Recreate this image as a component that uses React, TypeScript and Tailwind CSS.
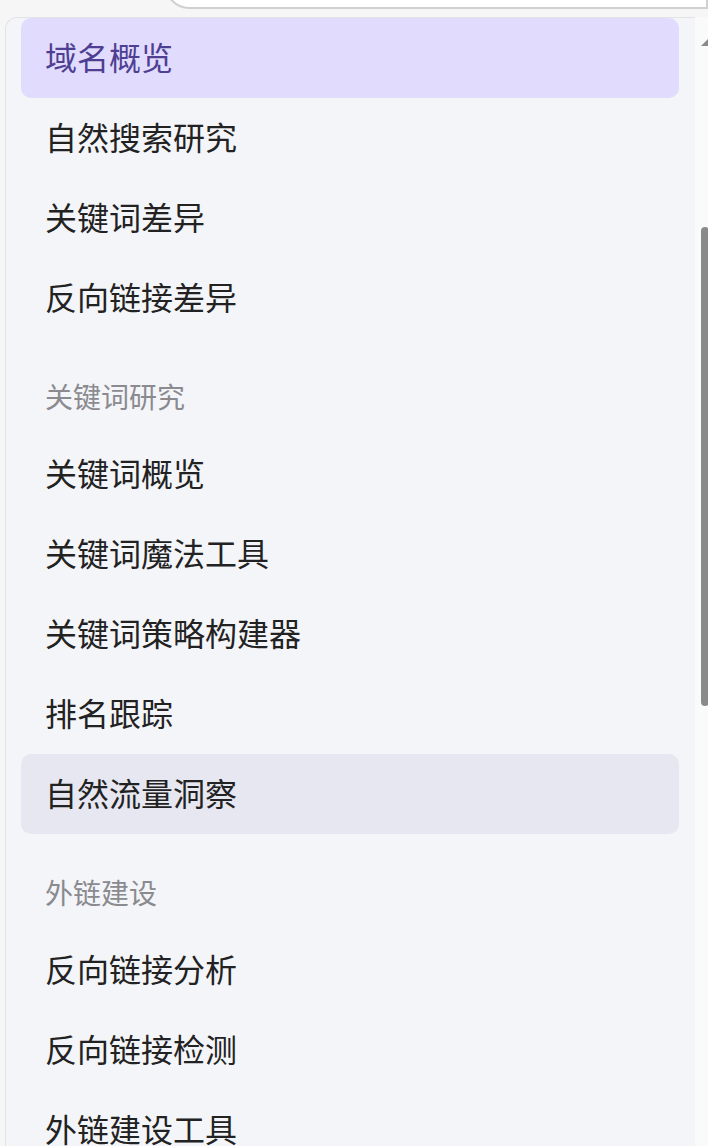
import React from "react";

type Entry =
  | { kind: "item"; label: string; active?: boolean; hover?: boolean }
  | { kind: "header"; label: string };

const entries: Entry[] = [
  { kind: "item", label: "域名概览", active: true },
  { kind: "item", label: "自然搜索研究" },
  { kind: "item", label: "关键词差异" },
  { kind: "item", label: "反向链接差异" },
  { kind: "header", label: "关键词研究" },
  { kind: "item", label: "关键词概览" },
  { kind: "item", label: "关键词魔法工具" },
  { kind: "item", label: "关键词策略构建器" },
  { kind: "item", label: "排名跟踪" },
  { kind: "item", label: "自然流量洞察", hover: true },
  { kind: "header", label: "外链建设" },
  { kind: "item", label: "反向链接分析" },
  { kind: "item", label: "反向链接检测" },
  { kind: "item", label: "外链建设工具" },
];

export default function App() {
  return (
    <div
      className="w-[708px] h-[1146px] overflow-hidden bg-[#f6f6f6] flex flex-col"
      style={{ fontFamily: '"Noto Sans CJK SC", "Noto Sans", sans-serif' }}
    >
      {/* trigger input peeking in at the top */}
      <div className="h-[17px] shrink-0 overflow-hidden flex">
        <div className="ml-[165px] -mt-[20px] h-[29px] flex-1 bg-white border-2 border-[#d0d0d0] rounded-bl-[24px]" />
      </div>

      <div className="flex flex-1 min-h-0">
        <div className="ml-[5px] flex-1 bg-[#f4f5f9] border-l border-t border-[#e3e3e6] rounded-tl-[12px] pl-[15px] pr-[16px]">
          {entries.map((e, i) =>
            e.kind === "header" ? (
              <div
                key={i}
                className="pt-[42px] pb-[22px] pl-[24px] text-[28px] leading-[32px] text-[#8a8a8f]"
              >
                {e.label}
              </div>
            ) : (
              <div
                key={i}
                className={
                  e.active
                    ? "h-[80px] flex items-center pl-[24px] pb-[4px] rounded-[10px] bg-[#e1dcfd] text-[#4f3f93] text-[32px]"
                    : e.hover
                    ? "h-[80px] flex items-center pl-[24px] pb-[4px] rounded-[10px] bg-[#e7e7f1] text-[#222222] text-[32px]"
                    : "h-[80px] flex items-center pl-[24px] pb-[4px] rounded-[10px] text-[#222222] text-[32px]"
                }
              >
                {e.label}
              </div>
            )
          )}
        </div>

        {/* scrollbar */}
        <div className="w-[13px] shrink-0 bg-[#fafafa] flex flex-col">
          <svg className="ml-[6px] mt-[22px] shrink-0" width="7" height="7" viewBox="0 0 7 7">
            <polygon points="0,7 7,0 7,7" fill="#8a8a8a" />
          </svg>
          <div className="ml-[6px] mt-[181px] w-[8px] h-[479px] shrink-0 rounded-[4px] bg-[#8a8a8a]" />
        </div>
      </div>
    </div>
  );
}
